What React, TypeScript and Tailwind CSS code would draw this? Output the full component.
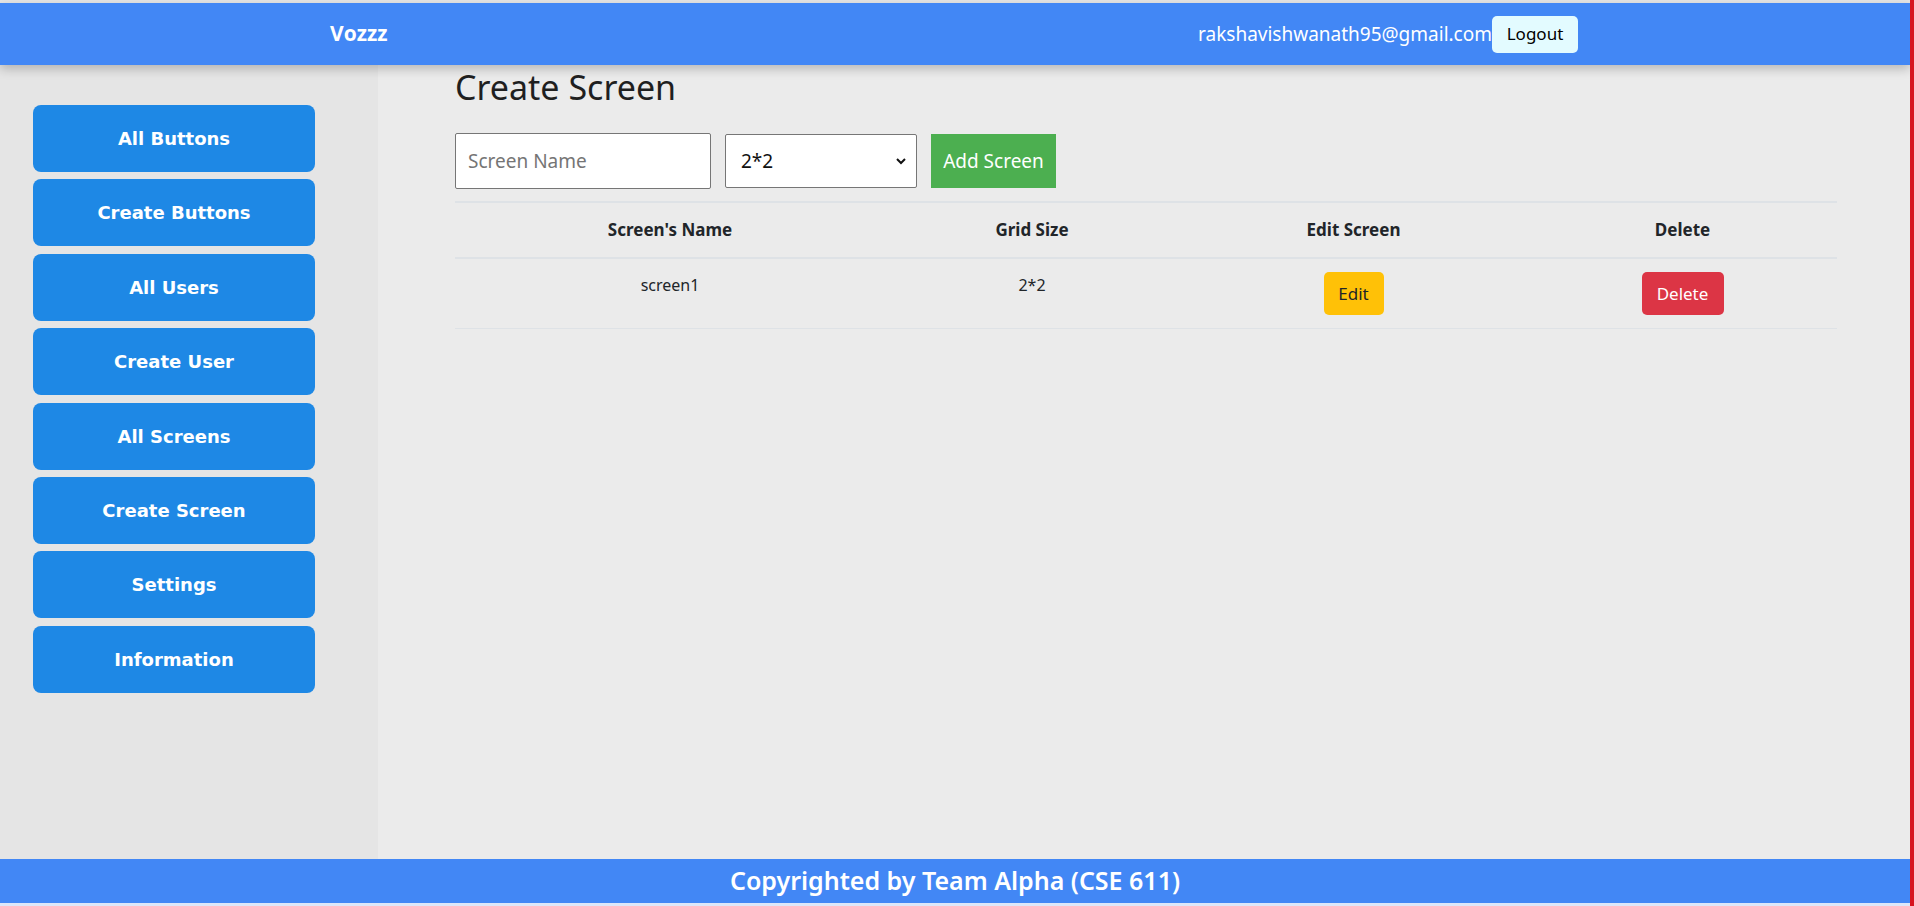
import React from "react";

const nav = [
  "All Buttons",
  "Create Buttons",
  "All Users",
  "Create User",
  "All Screens",
  "Create Screen",
  "Settings",
  "Information",
];

export default function App() {
  return (
    <div className="w-[1914px] h-[906px] flex flex-col bg-[#ebebeb] border-r-4 border-[#d7141f] overflow-hidden font-['Noto_Sans',sans-serif] text-[#212529]">
      <div className="h-[3px] shrink-0 bg-[#e6e6e6]" />
      <header className="relative z-10 h-[62px] shrink-0 bg-[#4287f5] shadow-[0_4px_10px_rgba(0,0,0,0.22)] flex items-center justify-between pl-[330px] pr-[332px]">
        <span className="text-white font-bold text-[21px] font-['Open_Sans',sans-serif]">Vozzz</span>
        <div className="flex items-center">
          <span className="text-white text-[19px]">rakshavishwanath95@gmail.com</span>
          <button className="h-[37px] w-[86px] rounded-[5px] bg-[#e3fbff] text-[17px] text-black">Logout</button>
        </div>
      </header>
      <div className="flex flex-1 min-h-0">
        <aside className="w-[378px] shrink-0 bg-[#e5e5e5] pt-[40px] pl-[33px] flex flex-col gap-[7.4px]">
          {nav.map((n) => (
            <button
              key={n}
              className="h-[67px] w-[282px] rounded-[8px] bg-[#1e88e5] text-white font-bold text-[18px] font-['DejaVu_Sans',sans-serif]"
            >
              {n}
            </button>
          ))}
        </aside>
        <main className="flex-1 pl-[77px] pr-[73px] pt-[2px]">
          <h1 className="text-[34px] leading-[40px] font-normal text-[#1f1f1f]">Create Screen</h1>
          <div className="mt-[26px] flex items-center h-[56px]">
            <input
              placeholder="Screen Name"
              className="h-[56px] w-[256px] bg-white border border-[#767676] rounded-[2px] pl-[12px] text-[19px] placeholder:text-[#757575] outline-none"
            />
            <div className="relative ml-[14px]">
              <select className="appearance-none h-[54px] w-[192px] bg-white border border-[#767676] rounded-[2px] pl-[15px] text-[19px] text-[#111] outline-none">
                <option>2*2</option>
                <option>3*3</option>
                <option>4*4</option>
              </select>
              <svg
                className="absolute right-[10px] top-[21px] pointer-events-none"
                width="12"
                height="12"
                viewBox="0 0 12 12"
              >
                <path d="M2 4 L6 8 L10 4" fill="none" stroke="#111" strokeWidth="2" />
              </svg>
            </div>
            <button className="ml-[14px] h-[54px] w-[125px] bg-[#4caf50] text-white text-[19px]">Add Screen</button>
          </div>
          <div className="mt-[12px]">
            <div className="grid grid-cols-[430px_294px_349px_309px] h-[58px] items-center border-y-2 border-[#dee2e6] font-bold text-[17px] text-center">
              <div>Screen's Name</div>
              <div>Grid Size</div>
              <div>Edit Screen</div>
              <div>Delete</div>
            </div>
            <div className="grid grid-cols-[430px_294px_349px_309px] items-start border-b border-[#dee2e6] text-[16px] text-center pt-[13px] pb-[13px]">
              <div className="leading-[26px]">screen1</div>
              <div className="leading-[26px]">2*2</div>
              <div className="flex justify-center">
                <button className="h-[43px] w-[60px] rounded-[5px] bg-[#ffc107] text-[#212529] text-[17px]">Edit</button>
              </div>
              <div className="flex justify-center">
                <button className="h-[43px] w-[82px] rounded-[5px] bg-[#dc3545] text-white text-[17px]">Delete</button>
              </div>
            </div>
          </div>
        </main>
      </div>
      <footer className="h-[44px] shrink-0 bg-[#4287f5] flex items-center justify-center text-white text-[25px] font-semibold">
        Copyrighted by Team Alpha (CSE 611)
      </footer>
      <div className="h-[3px] shrink-0 bg-[#dce7f9]" />
    </div>
  );
}
